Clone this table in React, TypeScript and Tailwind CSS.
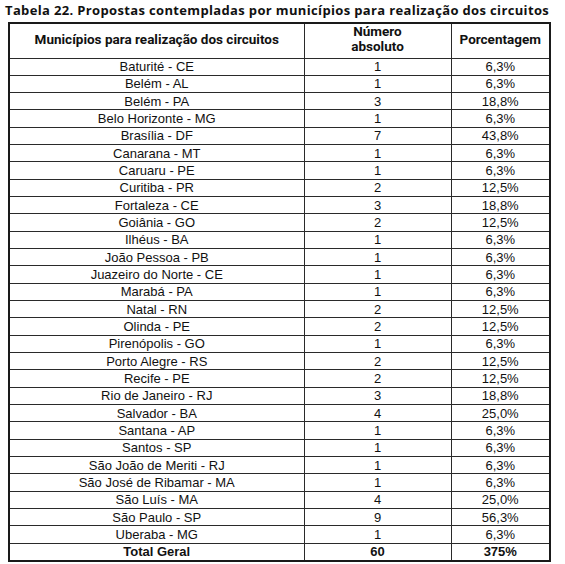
import React from "react";

const rows: [string, string, string][] = [
  ["Baturité - CE", "1", "6,3%"],
  ["Belém - AL", "1", "6,3%"],
  ["Belém - PA", "3", "18,8%"],
  ["Belo Horizonte - MG", "1", "6,3%"],
  ["Brasília - DF", "7", "43,8%"],
  ["Canarana - MT", "1", "6,3%"],
  ["Caruaru - PE", "1", "6,3%"],
  ["Curitiba - PR", "2", "12,5%"],
  ["Fortaleza - CE", "3", "18,8%"],
  ["Goiânia - GO", "2", "12,5%"],
  ["Ilhéus - BA", "1", "6,3%"],
  ["João Pessoa - PB", "1", "6,3%"],
  ["Juazeiro do Norte - CE", "1", "6,3%"],
  ["Marabá - PA", "1", "6,3%"],
  ["Natal - RN", "2", "12,5%"],
  ["Olinda - PE", "2", "12,5%"],
  ["Pirenópolis - GO", "1", "6,3%"],
  ["Porto Alegre - RS", "2", "12,5%"],
  ["Recife - PE", "2", "12,5%"],
  ["Rio de Janeiro - RJ", "3", "18,8%"],
  ["Salvador - BA", "4", "25,0%"],
  ["Santana - AP", "1", "6,3%"],
  ["Santos - SP", "1", "6,3%"],
  ["São João de Meriti - RJ", "1", "6,3%"],
  ["São José de Ribamar - MA", "1", "6,3%"],
  ["São Luís - MA", "4", "25,0%"],
  ["São Paulo - SP", "9", "56,3%"],
  ["Uberaba - MG", "1", "6,3%"],
];

export default function App() {
  const cell = "border border-[#2a2a2a] text-center align-middle p-0";
  return (
    <div className="w-[565px] h-[564px] bg-white text-[#111]">
      <div className="h-[22px] pl-[5px] pt-[2px] font-['Open_Sans',sans-serif] font-bold text-[13px] leading-[16px] tracking-[0.35px] whitespace-nowrap">
        Tabela 22. Propostas contempladas por municípios para realização dos circuitos
      </div>
      <table className="ml-[8px] w-[541px] table-fixed border-collapse border-2 border-[#1a1a1a] font-['Liberation_Sans',Arial,sans-serif] text-[13px] leading-[15px]">
        <colgroup>
          <col className="w-[295px]" />
          <col className="w-[147px]" />
          <col className="w-[99px]" />
        </colgroup>
        <thead className="font-['Roboto',Arial,sans-serif] text-[13.5px]">
          <tr className="h-[35px] font-bold">
            <th className={cell + " pb-[3px]"}>Municípios para realização dos circuitos</th>
            <th className={cell + " pb-[3px] leading-[15px]"}>
              Número
              <br />
              absoluto
            </th>
            <th className={cell + " pb-[3px]"}>Porcentagem</th>
          </tr>
        </thead>
        <tbody>
          {rows.map((r) => (
            <tr key={r[0]} className="h-[17.33px]">
              <td className={cell}>{r[0]}</td>
              <td className={cell}>{r[1]}</td>
              <td className={cell}>{r[2]}</td>
            </tr>
          ))}
          <tr className="h-[17.33px] font-bold">
            <td className={cell}>Total Geral</td>
            <td className={cell}>60</td>
            <td className={cell}>375%</td>
          </tr>
        </tbody>
      </table>
    </div>
  );
}
